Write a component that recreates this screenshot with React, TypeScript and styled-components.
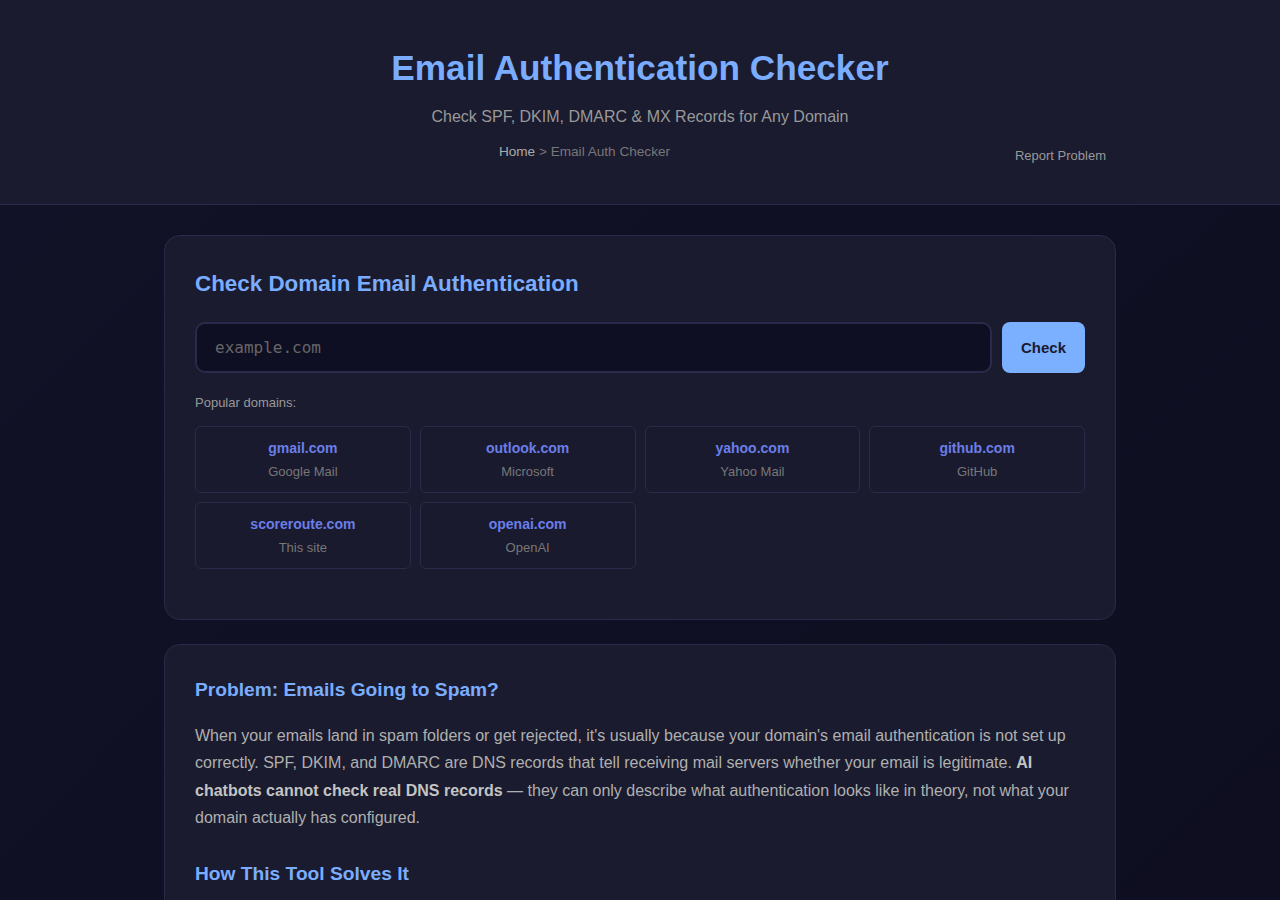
import React from "react";
import styled, { createGlobalStyle } from "styled-components";

const GlobalStyle = createGlobalStyle`
  * { box-sizing: border-box; }
  html, body {
    margin: 0;
    padding: 0;
    background: #0f0f23;
    font-family: "Liberation Sans", Arial, sans-serif;
    color: #e0e0e0;
  }
`;

const Page = styled.div`
  min-height: 100vh;
  background: linear-gradient(135deg, #121228 0%, #0e0e20 100%);
`;

const Header = styled.header`
  background: #1a1b2e;
  border-bottom: 1px solid #2a2a4a;
  padding: 46px 20px 41px;
  text-align: center;
`;

const Title = styled.h1`
  margin: 0;
  font-size: 35.2px;
  line-height: 44px;
  font-weight: 700;
  color: #7aadff;
`;

const Subtitle = styled.p`
  margin: 17px 0 0;
  font-size: 16px;
  line-height: 20px;
  color: #999;
`;

const NavRow = styled.div`
  width: 932px;
  margin: 14px auto 0;
  display: flex;
  align-items: center;
  gap: 20px;
`;

const Breadcrumb = styled.nav`
  flex: 1;
  text-align: center;
  font-size: 13.6px;
  line-height: 18px;
  color: #777;

  a {
    color: #aaa;
    text-decoration: none;
  }
`;

const ReportLink = styled.a`
  font-size: 13px;
  color: #999;
  text-decoration: none;
  padding-top: 7px;
`;

const Main = styled.main`
  width: 952px;
  margin: 30px auto 0;
  display: flex;
  flex-direction: column;
  gap: 24px;
`;

const Card = styled.section`
  background: #1a1b2e;
  border: 1px solid #2a2a4a;
  border-radius: 16px;
  padding: 30px;
`;

const CardTitle = styled.h2`
  margin: 4px 0 24px;
  font-size: 22.4px;
  line-height: 28px;
  font-weight: 700;
  color: #7aadff;
`;

const SearchRow = styled.div`
  display: flex;
  gap: 10px;
  margin-bottom: 22px;
`;

const DomainInput = styled.input`
  flex: 1;
  height: 51px;
  padding: 0 18px;
  background: #0f0f23;
  border: 2px solid #2a2a4a;
  border-radius: 10px;
  font-family: "DejaVu Sans Mono", "Liberation Mono", monospace;
  font-size: 16px;
  color: #e0e0e0;
  outline: none;

  &::placeholder {
    color: #666;
  }
`;

const CheckButton = styled.button`
  width: 83px;
  height: 51px;
  border: none;
  border-radius: 8px;
  background: #7ab0ff;
  color: #1a1a2e;
  font-family: "Liberation Sans", Arial, sans-serif;
  font-size: 15px;
  font-weight: 700;
  cursor: pointer;
`;

const SmallLabel = styled.div`
  font-size: 13px;
  line-height: 16px;
  color: #999;
  margin-bottom: 15px;
`;

const DomainGrid = styled.div`
  display: grid;
  grid-template-columns: repeat(4, 1fr);
  gap: 9px;
  margin-bottom: 20px;
`;

const DomainTile = styled.button`
  height: 67px;
  background: #1a1a2e;
  border: 1px solid #2a2a4a;
  border-radius: 6px;
  display: flex;
  flex-direction: column;
  align-items: center;
  justify-content: flex-start;
  gap: 8px;
  padding: 13px 8px 0;
  cursor: pointer;
  font-family: "Liberation Sans", Arial, sans-serif;
`;

const DomainName = styled.span`
  font-size: 14px;
  line-height: 16px;
  font-weight: 700;
  color: #6b7ee8;
`;

const DomainNote = styled.span`
  font-size: 13px;
  line-height: 15px;
  color: #777;
`;

const SectionTitle = styled.h3`
  margin: 3px 0 20px;
  font-size: 19.2px;
  line-height: 24px;
  font-weight: 700;
  color: #7aadff;
`;

const Body = styled.p`
  margin: 0 0 31px;
  font-size: 16px;
  line-height: 27.3px;
  color: #b0b0b0;

  strong {
    color: #c4c4c4;
  }
`;

const popular = [
  { domain: "gmail.com", note: "Google Mail" },
  { domain: "outlook.com", note: "Microsoft" },
  { domain: "yahoo.com", note: "Yahoo Mail" },
  { domain: "github.com", note: "GitHub" },
  { domain: "scoreroute.com", note: "This site" },
  { domain: "openai.com", note: "OpenAI" },
];

export default function App() {
  const [domain, setDomain] = React.useState("");

  return (
    <>
      <GlobalStyle />
      <Page>
        <Header>
          <Title>Email Authentication Checker</Title>
          <Subtitle>Check SPF, DKIM, DMARC &amp; MX Records for Any Domain</Subtitle>
          <NavRow>
            <Breadcrumb>
              <a href="#">Home</a> &gt; Email Auth Checker
            </Breadcrumb>
            <ReportLink href="#">Report Problem</ReportLink>
          </NavRow>
        </Header>

        <Main>
          <Card>
            <CardTitle>Check Domain Email Authentication</CardTitle>
            <SearchRow>
              <DomainInput
                placeholder="example.com"
                value={domain}
                onChange={(e) => setDomain(e.target.value)}
              />
              <CheckButton>Check</CheckButton>
            </SearchRow>
            <SmallLabel>Popular domains:</SmallLabel>
            <DomainGrid>
              {popular.map((p) => (
                <DomainTile key={p.domain} onClick={() => setDomain(p.domain)}>
                  <DomainName>{p.domain}</DomainName>
                  <DomainNote>{p.note}</DomainNote>
                </DomainTile>
              ))}
            </DomainGrid>
          </Card>

          <Card>
            <SectionTitle>Problem: Emails Going to Spam?</SectionTitle>
            <Body>
              When your emails land in spam folders or get rejected, it's usually because your
              domain's email authentication is not set up correctly. SPF, DKIM, and DMARC are DNS
              records that tell receiving mail servers whether your email is legitimate.{" "}
              <strong>AI chatbots cannot check real DNS records</strong> — they can only describe
              what authentication looks like in theory, not what your domain actually has
              configured.
            </Body>
            <SectionTitle>How This Tool Solves It</SectionTitle>
            <Body>
              Enter any domain and this tool performs live DNS lookups for SPF, DKIM, DMARC and MX
              records, then explains what each result means and what to fix.
            </Body>
          </Card>
        </Main>
      </Page>
    </>
  );
}
